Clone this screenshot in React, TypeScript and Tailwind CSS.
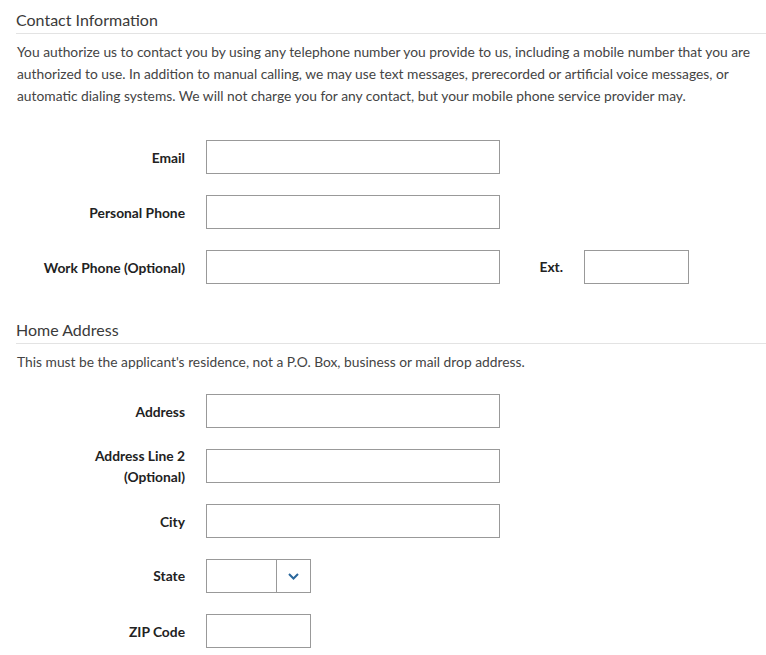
import React from "react";

function Field({ label, wide = true }: { label: React.ReactNode; wide?: boolean }) {
  return (
    <div className="flex h-[34px] items-center">
      <div className="w-[169px] text-right text-[13.8px] font-bold leading-[21px] text-[#222]">{label}</div>
      <input
        className={`ml-[21px] h-[34px] border border-[#999] bg-white ${wide ? "w-[294px]" : "w-[105px]"}`}
      />
    </div>
  );
}

function SectionTitle({ children }: { children: React.ReactNode }) {
  return (
    <div className="border-b border-[#e3e3e3] pt-[10px] pb-[3px] text-[16px] leading-[20px] text-[#3a3a3a]">
      {children}
    </div>
  );
}

export default function App() {
  return (
    <div className="min-h-[655px] bg-white pl-[16px] font-['Lato','Open_Sans',sans-serif]">
      <SectionTitle>Contact Information</SectionTitle>
      <p className="mt-[7px] pl-px pr-[10px] text-[13.8px] leading-[22px] text-[#444]">
        You authorize us to contact you by using any telephone number you provide to us, including a mobile number that you are
        authorized to use. In addition to manual calling, we may use text messages, prerecorded or artificial voice messages, or
        automatic dialing systems. We will not charge you for any contact, but your mobile phone service provider may.
      </p>

      <div className="mt-[33px] flex flex-col gap-[21px]">
        <Field label="Email" />
        <Field label="Personal Phone" />
        <div className="flex items-center">
          <Field label="Work Phone (Optional)" />
          <div className="w-[63px] text-right text-[13.8px] font-bold text-[#222]">Ext.</div>
          <input className="ml-[21px] h-[34px] w-[105px] border border-[#999] bg-white" />
        </div>
      </div>

      <div className="mt-[26px]">
        <SectionTitle>Home Address</SectionTitle>
      </div>
      <p className="mt-[7px] pl-px text-[13.8px] leading-[22px] text-[#444]">
        This must be the applicant's residence, not a P.O. Box, business or mail drop address.
      </p>

      <div className="mt-[21px] flex flex-col gap-[21px]">
        <Field label="Address" />
        <Field
          label={
            <>
              Address Line 2
              <br />
              (Optional)
            </>
          }
        />
        <Field label="City" />
        <div className="flex h-[34px] items-center">
          <div className="w-[169px] text-right text-[13.8px] font-bold text-[#222]">State</div>
          <div className="ml-[21px] flex h-[34px] w-[105px] border border-[#999] bg-white">
            <div className="flex-1" />
            <div className="flex w-[34px] items-center justify-center border-l border-[#999]">
              <svg width="11" height="7" viewBox="0 0 11 7" fill="none">
                <path d="M1 1l4.5 4.5L10 1" stroke="#2a679c" strokeWidth="2" />
              </svg>
            </div>
          </div>
        </div>
        <Field label="ZIP Code" wide={false} />
      </div>
    </div>
  );
}
